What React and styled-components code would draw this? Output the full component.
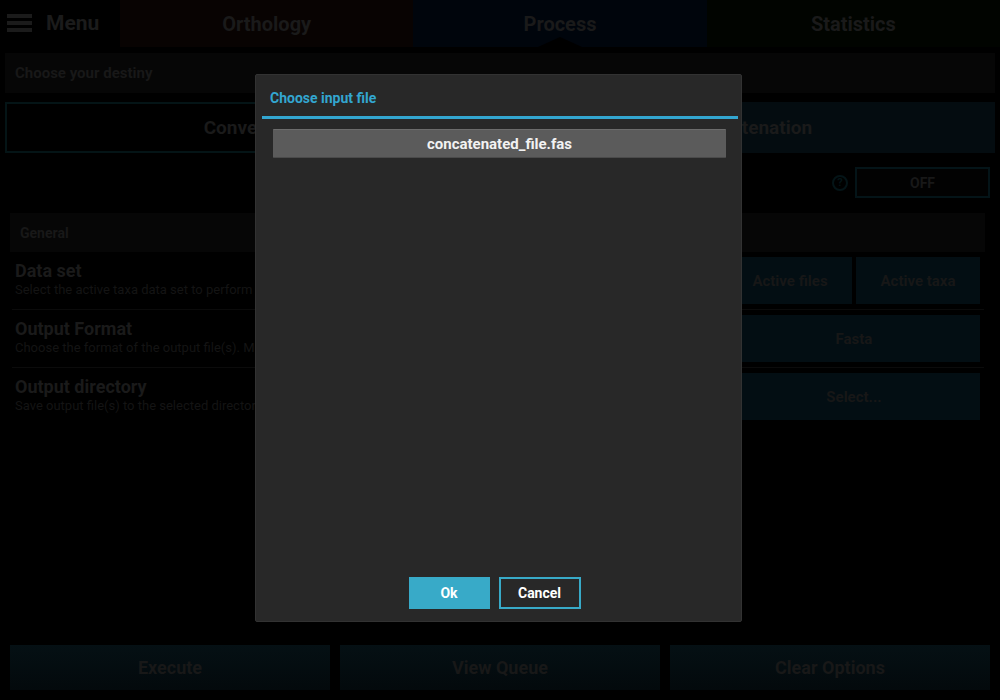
import React from "react";
import styled, { createGlobalStyle } from "styled-components";

const GlobalStyle = createGlobalStyle`
  html, body { margin: 0; padding: 0; background: #000; }
  body { font-family: Roboto, "Liberation Sans", sans-serif; }
  * { box-sizing: border-box; }
`;

const Screen = styled.div`
  position: relative;
  width: 1000px;
  height: 700px;
  overflow: hidden;
  display: flex;
  flex-direction: column;
  background: #000;
`;

const TopBar = styled.div`
  display: flex;
  height: 47px;
  flex: none;
`;

const MenuButton = styled.div`
  width: 120px;
  display: flex;
  align-items: center;
  padding-left: 7px;
  gap: 14px;
  padding-bottom: 2px;
`;

const Hamburger = styled.div`
  width: 25px;
  display: flex;
  flex-direction: column;
  gap: 3px;
  & > span {
    display: block;
    height: 4px;
    background: #1b1b1b;
  }
`;

const MenuLabel = styled.span`
  font-size: 21px;
  font-weight: 700;
  color: #1b1b1b;
`;

const Tab = styled.div`
  position: relative;
  flex: 1;
  display: flex;
  align-items: center;
  justify-content: center;
  background: ${(p) => p.$bg};
  font-size: 20px;
  font-weight: 700;
  color: #1a1a1a;
  ${(p) =>
    p.$active &&
    `
    &::after {
      content: "";
      position: absolute;
      bottom: 0;
      left: 50%;
      transform: translateX(-50%);
      border-left: 22px solid transparent;
      border-right: 22px solid transparent;
      border-bottom: 10px solid #000;
    }
  `}
`;

const Body = styled.div`
  flex: 1;
  padding: 6px 5px 0;
  display: flex;
  flex-direction: column;
`;

const DestinyBar = styled.div`
  height: 40px;
  background: #060606;
  display: flex;
  align-items: center;
  padding-left: 10px;
  font-size: 15px;
  font-weight: 700;
  color: #181818;
`;

const ModeRow = styled.div`
  margin-top: 9px;
  height: 51px;
  display: flex;
  gap: 6px;
`;

const ModeButton = styled.div`
  flex: 1;
  display: flex;
  align-items: center;
  justify-content: center;
  font-size: 19px;
  font-weight: 700;
  color: #1a1a1a;
  background: ${(p) => (p.$filled ? "#040c10" : "transparent")};
  border: ${(p) => (p.$filled ? "none" : "2px solid #041416")};
`;

const ToggleRow = styled.div`
  margin-top: 14px;
  height: 31px;
  display: flex;
  justify-content: flex-end;
  align-items: center;
  gap: 7px;
  padding-right: 5px;
`;

const HelpIcon = styled.span`
  width: 16px;
  height: 16px;
  border-radius: 50%;
  border: 2px solid #041417;
  display: flex;
  align-items: center;
  justify-content: center;
  font-size: 11px;
  font-weight: 700;
  color: #041417;
  line-height: 1;
`;

const ToggleButton = styled.div`
  width: 135px;
  height: 31px;
  border: 2px solid #041418;
  background: #020202;
  display: flex;
  align-items: center;
  justify-content: center;
  font-size: 14px;
  font-weight: 700;
  color: #181818;
`;

const Section = styled.div`
  margin: 15px 10px 0 5px;
  display: flex;
  flex-direction: column;
`;

const SectionHeader = styled.div`
  height: 39px;
  background: #060606;
  display: flex;
  align-items: center;
  padding-left: 10px;
  font-size: 14px;
  font-weight: 700;
  color: #181818;
`;

const OptionRow = styled.div`
  height: 58px;
  display: flex;
  justify-content: space-between;
  padding: 5px 4px 5px 5px;
  border-bottom: 1px solid ${(p) => (p.$last ? "transparent" : "#0b0b0b")};
  margin: 0 1px 0 2px;
`;

const OptionText = styled.div`
  display: flex;
  flex-direction: column;
  padding-top: 3px;
  margin-left: -2px;
  white-space: nowrap;
`;

const OptionTitle = styled.div`
  font-size: 18px;
  font-weight: 700;
  color: #1a1a1a;
  line-height: 22px;
`;

const OptionDesc = styled.div`
  font-size: 13px;
  color: #141414;
  line-height: 16px;
`;

const OptionControls = styled.div`
  width: 252px;
  flex: none;
  display: flex;
  gap: 4px;
`;

const OptionButton = styled.div`
  flex: 1;
  height: 47px;
  background: #030e13;
  display: flex;
  align-items: center;
  justify-content: center;
  font-size: 15px;
  font-weight: 700;
  color: #171717;
`;

const BottomBar = styled.div`
  flex: none;
  height: 45px;
  margin: 0 10px 10px;
  display: flex;
  gap: 10px;
`;

const BottomButton = styled.div`
  flex: 1;
  display: flex;
  align-items: center;
  justify-content: center;
  background: linear-gradient(#051014, #03090c);
  font-size: 18px;
  font-weight: 700;
  color: #181818;
`;

const Backdrop = styled.div`
  position: absolute;
  inset: 0;
  display: flex;
  justify-content: center;
  align-items: flex-start;
  padding-top: 74px;
  padding-right: 3px;
`;

const Dialog = styled.div`
  width: 487px;
  height: 548px;
  background: #282828;
  border: 1px solid #323232;
  border-radius: 2px;
  display: flex;
  flex-direction: column;
`;

const DialogTitle = styled.div`
  height: 40px;
  display: flex;
  align-items: center;
  padding-left: 14px;
  padding-top: 6px;
  font-size: 14px;
  font-weight: 700;
  color: #33a6d0;
`;

const TitleRule = styled.div`
  height: 3px;
  margin: 1px 3px 0 6px;
  background: #33a6d0;
`;

const FileList = styled.div`
  flex: 1;
  padding: 10px 15px 0 17px;
`;

const FileItem = styled.div`
  height: 29px;
  background: #5b5b5b;
  border-top: 1px solid #6c6c6c;
  border-bottom: 1px solid #4a4a4a;
  border-radius: 1px;
  display: flex;
  align-items: center;
  justify-content: center;
  font-size: 15px;
  font-weight: 700;
  color: #f2f2f2;
`;

const DialogActions = styled.div`
  display: flex;
  justify-content: center;
  gap: 9px;
  padding: 0 0 12px 0;
  margin-left: -8px;
`;

const DialogButton = styled.div`
  width: ${(p) => (p.$outline ? "82px" : "81px")};
  height: 32px;
  display: flex;
  align-items: center;
  justify-content: center;
  font-size: 14px;
  font-weight: 700;
  color: #fff;
  background: ${(p) => (p.$outline ? "transparent" : "#38aac8")};
  border: 2px solid #38aac8;
`;

export default function App() {
  return (
    <>
      <GlobalStyle />
      <Screen>
        <TopBar>
          <MenuButton>
            <Hamburger>
              <span />
              <span />
              <span />
            </Hamburger>
            <MenuLabel>Menu</MenuLabel>
          </MenuButton>
          <Tab $bg="#080302">Orthology</Tab>
          <Tab $bg="#00050c" $active>
            Process
          </Tab>
          <Tab $bg="#010400">Statistics</Tab>
        </TopBar>
        <Body>
          <DestinyBar>Choose your destiny</DestinyBar>
          <ModeRow>
            <ModeButton>Conversion</ModeButton>
            <ModeButton $filled>Concatenation</ModeButton>
          </ModeRow>
          <ToggleRow>
            <HelpIcon>?</HelpIcon>
            <ToggleButton>OFF</ToggleButton>
          </ToggleRow>
          <Section>
            <SectionHeader>General</SectionHeader>
            <OptionRow>
              <OptionText>
                <OptionTitle>Data set</OptionTitle>
                <OptionDesc>Select the active taxa data set to perform operation</OptionDesc>
              </OptionText>
              <OptionControls>
                <OptionButton>Active files</OptionButton>
                <OptionButton>Active taxa</OptionButton>
              </OptionControls>
            </OptionRow>
            <OptionRow>
              <OptionText>
                <OptionTitle>Output Format</OptionTitle>
                <OptionDesc>Choose the format of the output file(s). Multiple formats may be selected</OptionDesc>
              </OptionText>
              <OptionControls>
                <OptionButton>Fasta</OptionButton>
              </OptionControls>
            </OptionRow>
            <OptionRow $last>
              <OptionText>
                <OptionTitle>Output directory</OptionTitle>
                <OptionDesc>Save output file(s) to the selected directory</OptionDesc>
              </OptionText>
              <OptionControls>
                <OptionButton>Select...</OptionButton>
              </OptionControls>
            </OptionRow>
          </Section>
        </Body>
        <BottomBar>
          <BottomButton>Execute</BottomButton>
          <BottomButton>View Queue</BottomButton>
          <BottomButton>Clear Options</BottomButton>
        </BottomBar>
        <Backdrop>
          <Dialog>
            <DialogTitle>Choose input file</DialogTitle>
            <TitleRule />
            <FileList>
              <FileItem>concatenated_file.fas</FileItem>
            </FileList>
            <DialogActions>
              <DialogButton>Ok</DialogButton>
              <DialogButton $outline>Cancel</DialogButton>
            </DialogActions>
          </Dialog>
        </Backdrop>
      </Screen>
    </>
  );
}
